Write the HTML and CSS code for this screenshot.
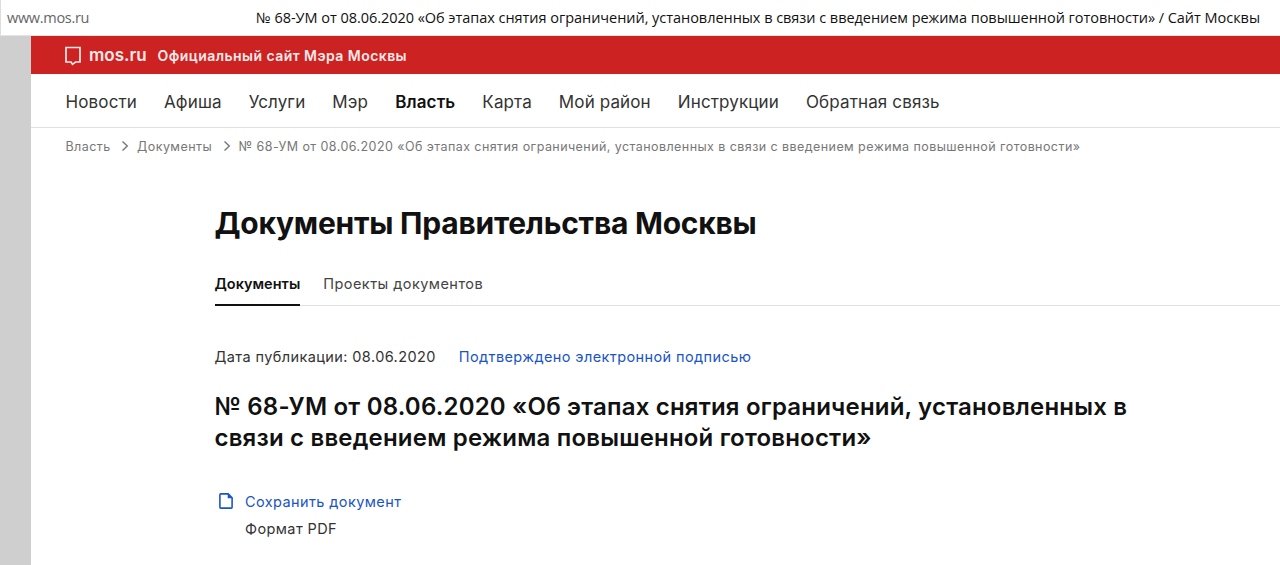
FILE: index.html
```html
<!DOCTYPE html>
<html lang="ru">
<head>
    <meta charset="UTF-8">
    <meta name="viewport" content="width=device-width, initial-scale=1.0">
    <title>№ 68-УМ от 08.06.2020 / Сайт Москвы</title>
    <link rel="stylesheet" href="styles.css">
</head>
<body>
    <div class="address-bar">
        <span class="address">www.mos.ru</span>
        <span class="page-title">№ 68-УМ от 08.06.2020 «Об этапах снятия ограничений, установленных в связи с введением режима повышенной готовности» / Сайт Москвы</span>
    </div>
    <div class="site">
        <header class="header">
            <svg class="logo" width="16" height="20" viewBox="0 0 16 20" fill="none" stroke="#fbeaea" stroke-width="1.7">
                <path d="M1 1.5H15V16H10.5L7.5 18.3L6 16H1Z"/>
            </svg>
            <span class="brand">mos.ru</span>
            <span class="slogan">Официальный сайт Мэра Москвы</span>
        </header>
        <nav class="nav">
            <a class="nav-link" href="#">Новости</a>
            <a class="nav-link" href="#">Афиша</a>
            <a class="nav-link" href="#">Услуги</a>
            <a class="nav-link" href="#">Мэр</a>
            <a class="nav-link active" href="#">Власть</a>
            <a class="nav-link" href="#">Карта</a>
            <a class="nav-link" href="#">Мой район</a>
            <a class="nav-link" href="#">Инструкции</a>
            <a class="nav-link" href="#">Обратная связь</a>
        </nav>
        <div class="breadcrumbs">
            <a class="crumb" href="#">Власть</a>
            <svg class="chevron" width="8" height="12" viewBox="0 0 8 12" fill="none" stroke="#777" stroke-width="1.4"><path d="M1.5 1.5L6.3 6L1.5 10.5"/></svg>
            <a class="crumb" href="#">Документы</a>
            <svg class="chevron" width="8" height="12" viewBox="0 0 8 12" fill="none" stroke="#777" stroke-width="1.4"><path d="M1.5 1.5L6.3 6L1.5 10.5"/></svg>
            <span class="crumb">№ 68-УМ от 08.06.2020 «Об этапах снятия ограничений, установленных в связи с введением режима повышенной готовности»</span>
        </div>
        <main class="content">
            <h1>Документы Правительства Москвы</h1>
            <div class="tabs">
                <a class="tab active" href="#">Документы</a>
                <a class="tab" href="#">Проекты документов</a>
            </div>
            <div class="meta">
                <span class="date">Дата публикации: 08.06.2020</span>
                <a class="signature" href="#">Подтверждено электронной подписью</a>
            </div>
            <h2>№ 68-УМ от 08.06.2020 «Об этапах снятия ограничений, установленных в<br>связи с введением режима повышенной готовности»</h2>
            <div class="download">
                <svg class="file-icon" width="14" height="16" viewBox="0 0 14 16">
                    <path d="M1.8 .9H9.2L13.1 4.8V14.2Q13.1 15.1 12.2 15.1H1.8Q.9 15.1 .9 14.2V1.8Q.9 .9 1.8 .9Z" fill="none" stroke="#1a55c4" stroke-width="1.6"/>
                    <path d="M8.7 .6V5.3H13.4Z" fill="#1a55c4"/>
                </svg>
                <div>
                    <a class="save" href="#">Сохранить документ</a>
                    <div class="format">Формат PDF</div>
                </div>
            </div>
        </main>
    </div>
</body>
</html>
```
FILE: styles.css
```css
body {
    margin: 0;
    height: 565px;
    overflow: hidden;
    display: flex;
    flex-direction: column;
    background-color: #cfcfcf;
    font-family: Inter, "Liberation Sans", sans-serif;
    color: #111;
}

a {
    color: inherit;
    text-decoration: none;
}

span, a {
    white-space: nowrap;
}

.address-bar {
    height: 36px;
    box-sizing: border-box;
    display: flex;
    justify-content: space-between;
    padding: 0 20px 0 6px;
    border-left: 1px solid #ddd;
    border-bottom: 1px solid #e4e4e4;
    background: #fff;
    font-family: "Open Sans", "Noto Sans", sans-serif;
    font-size: 14.5px;
    line-height: 35px;
    letter-spacing: -0.04px;
}

.address {
    color: #666;
    letter-spacing: -0.3px;
}

.site {
    flex: 1;
    margin-left: 31px;
    background: #fff;
}

.header {
    height: 38px;
    display: flex;
    align-items: center;
    padding-left: 34px;
    background: #cc2222;
    color: #fbeaea;
}

.logo {
    margin-top: 2px;
}

.brand {
    margin: 0 11px 0 8px;
    font-size: 17px;
    font-weight: 600;
}

.slogan {
    font-size: 14px;
    font-weight: 600;
    letter-spacing: 0.45px;
}

.nav {
    height: 51px;
    display: flex;
    align-items: center;
    gap: 27px;
    padding: 2px 0 0 34.5px;
    border-bottom: 1px solid #e0e0e0;
    font-size: 17px;
    letter-spacing: 0.13px;
    color: #333;
}

.nav-link.active {
    font-weight: 600;
    color: #111;
}

.breadcrumbs {
    height: 36px;
    display: flex;
    align-items: center;
    padding: 0 0 2px 34.5px;
    font-size: 12.5px;
    letter-spacing: 0.43px;
    color: #777;
}

.chevron {
    margin: 0 8px 0 10.5px;
}

.content {
    padding-left: 183.5px;
}

h1 {
    margin: 37px 0 0;
    font-size: 30px;
    line-height: 40px;
    font-weight: 700;
    letter-spacing: -0.24px;
}

.tabs {
    height: 42px;
    display: flex;
    gap: 23px;
    margin-top: 20px;
    border-bottom: 1px solid #e2e2e2;
    font-size: 14.5px;
    line-height: 42px;
    letter-spacing: 0.45px;
    color: #444;
}

.tab.active {
    height: 41px;
    border-bottom: 2px solid #111;
    font-weight: 600;
    letter-spacing: 0;
    color: #111;
}

.meta {
    display: flex;
    gap: 23px;
    margin-top: 41px;
    font-size: 14.5px;
    line-height: 20px;
    letter-spacing: 0.4px;
    color: #333;
}

.signature, .save {
    color: #1a55c4;
}

h2 {
    margin: 24px 0 0;
    font-size: 24px;
    line-height: 31px;
    font-weight: 600;
    letter-spacing: 0.19px;
}

.download {
    display: flex;
    gap: 12px;
    margin-top: 35px;
    padding-left: 4.5px;
    font-size: 14.5px;
    line-height: 27px;
    letter-spacing: 0.4px;
    color: #333;
}

.file-icon {
    margin-top: 5px;
}
```
